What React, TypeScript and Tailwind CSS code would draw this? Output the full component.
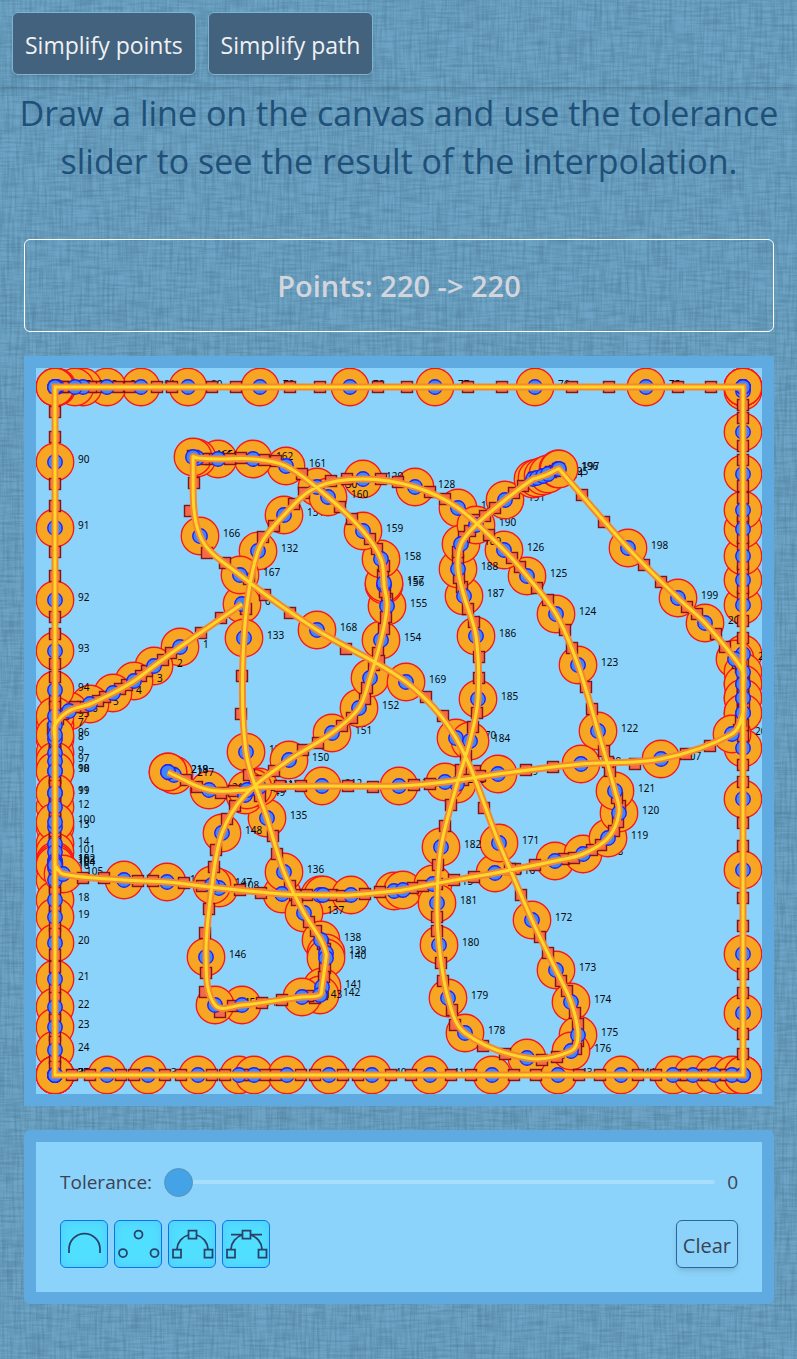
import { useState } from "react";
import type { ReactNode } from "react";

type Point = [number, number];

const repeat = (point: Point, times: number): Point[] => Array.from({ length: times }, () => point);
const column = (x: number, ys: number[]): Point[] => ys.map((y) => [x, y]);
const row = (y: number, xs: number[]): Point[] => xs.map((x) => [x, y]);

const LEFT = 55;
const RIGHT = 743;
const TOP = 387;
const BOTTOM = 1075;

const POINTS: Point[] = [
  [242, 604], [180, 647], [154, 666], [134, 681], [113, 693], [90, 704], [69, 711],
  ...column(LEFT, [725, 739, 753, 771, 793, 807, 827, 844, 861, 868, 880, 900, 917, 943, 979, 1007, 1027, 1050]),
  ...repeat([LEFT, BOTTOM], 8),
  ...row(BOTTOM, [107, 148, 198, 239, 254, 287, 329, 372, 430, 492, 558, 621, 673, 693, 714, 732]),
  ...repeat([RIGHT, BOTTOM], 3),
  ...column(RIGHT, [1013, 954, 870, 799, 748, 713, 698, 684, 654, 605, 580, 556, 529, 510, 474, 432, 391]),
  ...repeat([RIGHT, TOP], 6),
  ...row(TOP, [646, 535, 435, 350, 260, 188, 141, 107, 83, 75]),
  ...row(TOP, [57, 56]),
  ...repeat([LEFT, TOP], 3),
  ...column(LEFT, [462, 528, 600, 651, 690, 716, 735, 761, 771, 793, 822, 852, 861, 863, 865]),
  [63, 874], [124, 880], [167, 882], [219, 888], [282, 894], [320, 895], [323, 895], [351, 895], [394, 891], [403, 890],
  [433, 884], [495, 873], [555, 861], [583, 854], [608, 838], [619, 813], [615, 791], [598, 731], [578, 665], [556, 614],
  [527, 576], [504, 550], [458, 508], [415, 487], [363, 479], [317, 487], [284, 515], [258, 551], [244, 638], [246, 752],
  [267, 818], [284, 872], [304, 913], [321, 940], [326, 953], [326, 958], [322, 987], [320, 995], [302, 997], [242, 1005],
  [215, 1005], [206, 957], [212, 885], [222, 833], [245, 795], [289, 760], [332, 733], [359, 708], [370, 678], [381, 640],
  [387, 606], [384, 585], [384, 583], [381, 559], [363, 531], [328, 497], [286, 466], [253, 459], [218, 459], [197, 458],
  [193, 457], [200, 536], [240, 575], [317, 630], [406, 682], [456, 738], [499, 843], [532, 920], [556, 970], [571, 1002],
  [578, 1035], [571, 1051], [527, 1058], [465, 1033], [448, 998], [439, 945], [437, 903], [441, 847], [457, 784], [470, 741],
  [478, 699], [476, 636], [464, 596], [458, 569], [461, 544], [476, 525], [505, 500], [533, 479], [537, 478], [543, 476],
  [548, 474], [558, 469], [559, 469], [628, 548], [678, 598], [705, 623], [735, 659], [743, 672], [743, 684], [743, 698],
  [743, 713], [732, 734], [661, 759], [581, 764], [498, 774], [445, 782], [399, 786], [322, 786], [259, 787], [253, 788],
  [247, 790], [209, 790], [174, 775], [168, 772], [168, 772],
];

const distance = (a: Point, b: Point) => Math.hypot(a[0] - b[0], a[1] - b[1]);

/** Handles lie along the chord of the two neighbours, a third of a segment away. */
function handlesOf(index: number): { before: Point; after: Point } {
  const p = POINTS[index];
  const prev = POINTS[index - 1] ?? p;
  const next = POINTS[index + 1] ?? p;
  const length = distance(prev, next) || 1;
  const ux = (next[0] - prev[0]) / length;
  const uy = (next[1] - prev[1]) / length;
  const back = distance(prev, p) / 3;
  const forth = distance(p, next) / 3;
  return {
    before: [p[0] - ux * back, p[1] - uy * back],
    after: [p[0] + ux * forth, p[1] + uy * forth],
  };
}

const HANDLES = POINTS.map((_, i) => handlesOf(i));

const CURVE = POINTS.map((p, i) =>
  i === 0 ? `M${p.join(" ")}` : `C${HANDLES[i - 1].after.join(" ")} ${HANDLES[i].before.join(" ")} ${p.join(" ")}`,
).join("");

interface Layers {
  curve: boolean;
  points: boolean;
  handles: boolean;
  tangents: boolean;
}

function Drawing({ layers }: { layers: Layers }) {
  return (
    <svg viewBox="36 368 726 726" className="block w-full bg-[#8bd3fa]" role="img" aria-label="Drawn path">
      {layers.points &&
        POINTS.map(([x, y], i) => (
          <g key={i}>
            <circle cx={x} cy={y} r={18.75} fill="#f7a623" stroke="#fb1418" strokeWidth={1.3} />
            {x < RIGHT && (
              <text x={x + 23} y={y + 1} className="font-['Noto_Sans',sans-serif] text-[10px]" fill="#05070c">
                {i}
              </text>
            )}
          </g>
        ))}
      {layers.handles &&
        HANDLES.flatMap(({ before, after }, i) =>
          [before, after].map(([x, y], k) =>
            (i === 0 && k === 0) || distance([x, y], POINTS[i]) < 0.1 ? null : (
              <rect
                key={`${i}-${k}`}
                x={Math.round(x) - 5.5}
                y={Math.round(y) - 5.5}
                width={11}
                height={11}
                fill="#f4694a"
                stroke="#7d0f10"
                strokeWidth={1.4}
                strokeOpacity={0.95}
              />
            ),
          ),
        )}
      {layers.tangents &&
        POINTS.map(([x, y], i) => <circle key={i} cx={x} cy={y} r={7.25} fill="#3d86fb" stroke="#1f22fa" strokeWidth={1.4} />)}
      {layers.curve && (
        <g fill="none" strokeLinecap="butt" strokeLinejoin="miter">
          <path d={CURVE} stroke="#f5872f" strokeWidth={7} />
          <path d={CURVE} stroke="#fdd82b" strokeWidth={3} />
        </g>
      )}
    </svg>
  );
}

function Cloth() {
  return (
    <svg className="absolute inset-0 -z-10 size-full" aria-hidden="true">
      <filter id="weft" x="0" y="0" width="100%" height="100%" colorInterpolationFilters="sRGB">
        <feTurbulence type="fractalNoise" baseFrequency="0.04 0.4" numOctaves={2} seed={4} />
        <feColorMatrix values="0 0 0 0 0.25  0 0 0 0 0.42  0 0 0 0 0.53  0.7 0 0 0 -0.25" />
      </filter>
      <filter id="warp" x="0" y="0" width="100%" height="100%" colorInterpolationFilters="sRGB">
        <feTurbulence type="fractalNoise" baseFrequency="0.4 0.03" numOctaves={2} seed={9} />
        <feColorMatrix values="0 0 0 0 0.25  0 0 0 0 0.42  0 0 0 0 0.53  0.7 0 0 0 -0.25" />
      </filter>
      <rect width="100%" height="100%" fill="#6ea5c6" />
      <rect width="100%" height="100%" filter="url(#weft)" />
      <rect width="100%" height="100%" filter="url(#warp)" />
    </svg>
  );
}

function NavButton({ children }: { children: ReactNode }) {
  return (
    <button
      type="button"
      className="h-[63px] rounded-md border border-[#7db3d3] bg-[#43627d] px-3 pt-1 text-[23px] text-[#f0f1f4] shadow-md"
    >
      {children}
    </button>
  );
}

interface ToggleProps {
  label: string;
  pressed: boolean;
  onToggle: () => void;
  children: ReactNode;
}

function Toggle({ label, pressed, onToggle, children }: ToggleProps) {
  return (
    <button
      type="button"
      aria-label={label}
      aria-pressed={pressed}
      onClick={onToggle}
      className="size-12 rounded-md border border-[#0876e4] bg-[#8bd3fa] aria-pressed:bg-[#51dfff] aria-pressed:shadow-[inset_0_0_8px_2px_#52cffc]"
    >
      <svg viewBox="0 0 46 46" className="size-full" fill="none" stroke="#2b4268" strokeWidth={1.75}>
        {children}
      </svg>
    </button>
  );
}

const ARC = "M8 32v-4a15.5 15.5 0 0 1 31 0v4";

export default function App() {
  const [tolerance, setTolerance] = useState(0);
  const [layers, setLayers] = useState<Layers>({ curve: true, points: true, handles: true, tangents: true });
  const toggle = (key: keyof Layers) => () => setLayers((now) => ({ ...now, [key]: !now[key] }));

  return (
    <div className="relative isolate min-h-screen overflow-hidden bg-[#6699b8] font-['Open_Sans','Noto_Sans',sans-serif] text-[#3b4252]">
      <Cloth />
      <header className="flex gap-3 p-3 shadow-[0_0_6px_rgba(40,70,90,0.55)]">
        <NavButton>Simplify points</NavButton>
        <NavButton>Simplify path</NavButton>
      </header>

      <main className="flex flex-col gap-6 pr-[23px] pb-13 pl-6">
        <h1 className="-mx-2 mt-0.5 mb-[30px] text-center text-[34px] leading-12 text-[#204f78]">
          Draw a line on the canvas and use the tolerance slider to see the result of the interpolation.
        </h1>

        <p className="rounded-md border border-white py-6 text-center text-[29px] leading-[43px] font-semibold text-[#d3d5dd]">
          Points: 220 -&gt; 220
        </p>

        <section className="border-12 border-[#5fabe1]">
          <Drawing layers={layers} />
        </section>

        <section className="rounded-md bg-[#5fabe1] p-3">
          <div className="flex flex-col gap-[22px] bg-[#8bd3fa] p-6">
            <div className="flex h-8 items-center text-[19px]">
              <label htmlFor="tolerance" className="mr-3">
                Tolerance:
              </label>
              <input
                id="tolerance"
                type="range"
                min={0}
                max={100}
                value={tolerance}
                onChange={(event) => setTolerance(Number(event.target.value))}
                className="h-1 min-w-0 flex-1 appearance-none rounded-full bg-[#a8ddfb] [&::-webkit-slider-thumb]:size-[29px] [&::-webkit-slider-thumb]:appearance-none [&::-webkit-slider-thumb]:rounded-full [&::-webkit-slider-thumb]:border [&::-webkit-slider-thumb]:border-[#5b93b8] [&::-webkit-slider-thumb]:bg-[#43a3e6]"
              />
              <output htmlFor="tolerance" className="ml-3">
                {tolerance}
              </output>
            </div>
            <div className="flex gap-1.5">
              <Toggle label="Show curve" pressed={layers.curve} onToggle={toggle("curve")}>
                <path d={ARC} />
              </Toggle>
              <Toggle label="Show points" pressed={layers.points} onToggle={toggle("points")}>
                <circle cx={23.5} cy={13.5} r={4} />
                <circle cx={8} cy={32} r={4} />
                <circle cx={39.5} cy={32} r={4} />
              </Toggle>
              <Toggle label="Show handles" pressed={layers.handles} onToggle={toggle("handles")}>
                <path d="M8 28a15.5 15.5 0 0 1 11.5-14M27.5 14A15.5 15.5 0 0 1 39 28" />
                <path d="M19.5 9.5h8v8h-8zM4 28.5h8v8h-8zM35.5 28.5h8v8h-8z" />
              </Toggle>
              <Toggle label="Show tangents" pressed={layers.tangents} onToggle={toggle("tangents")}>
                <path d="M8 28a15.5 15.5 0 0 1 11.5-14M27.5 14A15.5 15.5 0 0 1 39 28M8 13.5h11.5M27.5 13.5H39" />
                <path d="M19.5 9.5h8v8h-8zM4 28.5h8v8h-8zM35.5 28.5h8v8h-8z" />
              </Toggle>
              <button
                type="button"
                className="ml-auto h-12 rounded-md border border-[#2c64a0] bg-[#8bd3fa] px-1.5 pt-1 text-[20px] shadow-md"
              >
                Clear
              </button>
            </div>
          </div>
        </section>
      </main>
    </div>
  );
}
